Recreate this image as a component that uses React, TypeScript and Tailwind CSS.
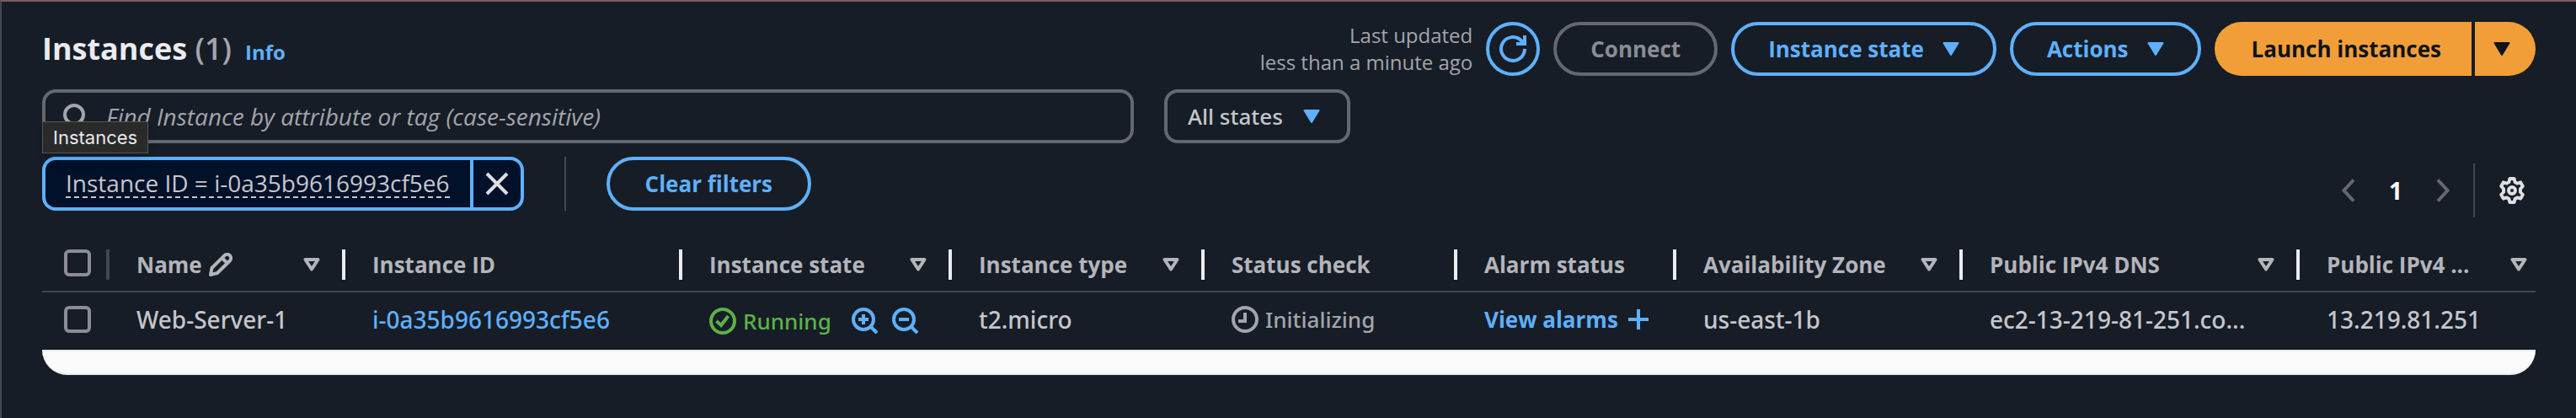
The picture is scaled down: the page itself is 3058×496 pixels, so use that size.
import React from "react";

function Caret({ className = "" }: { className?: string }) {
  return (
    <svg viewBox="0 0 20 16" className={"h-4 w-5 shrink-0 " + className} aria-hidden="true">
      <path d="M1.5 1h17L10 15z" fill="currentColor" stroke="currentColor" strokeWidth="2" strokeLinejoin="round" />
    </svg>
  );
}

function SortIcon() {
  return (
    <svg viewBox="0 0 20 16" className="h-4 w-5 shrink-0" aria-hidden="true">
      <path d="M2.5 2h15L10 13.5z" fill="none" stroke="currentColor" strokeWidth="4" strokeLinejoin="round" />
    </svg>
  );
}

function Zoom({ plus }: { plus: boolean }) {
  return (
    <svg viewBox="0 0 32 32" className="size-8" fill="none" stroke="currentColor" strokeWidth="4" aria-hidden="true">
      <circle cx="14" cy="14" r="12" />
      <path d="M22.5 22.5 30 30M8 14h12" />
      {plus && <path d="M14 8v12" />}
    </svg>
  );
}

const outline = "flex h-16 items-center rounded-full border-4 font-['Open_Sans',sans-serif] text-[26px] font-bold";
const checkbox =
  "block size-8 appearance-none rounded-md border-4 border-[#8c8c94] bg-transparent";

const columns: { label: string; sort?: boolean; edit?: boolean; width: string }[] = [
  { label: "Name", sort: true, edit: true, width: "w-[280px]" },
  { label: "Instance ID", width: "w-[400px]" },
  { label: "Instance state", sort: true, width: "w-[320px]" },
  { label: "Instance type", sort: true, width: "w-[300px]" },
  { label: "Status check", width: "w-[300px]" },
  { label: "Alarm status", width: "w-[260px]" },
  { label: "Availability Zone", sort: true, width: "w-[340px]" },
  { label: "Public IPv4 DNS", sort: true, width: "w-[400px]" },
  { label: "Public IPv4 ...", sort: true, width: "w-[280px]" },
];

export default function App() {
  return (
    <main className="min-h-screen border-t-2 border-l-2 border-t-[#7d5a5f] border-l-[#424650] bg-[#161d26] pt-6 pr-12 pb-12 pl-12 font-['Noto_Sans','Open_Sans',sans-serif] text-[28px] leading-10 font-medium text-[#c6c6cd]">
      <header className="flex items-center justify-between font-['Open_Sans','Noto_Sans',sans-serif]">
        <div className="flex items-baseline gap-4">
          <h1 className="text-4xl font-bold text-[#ebebf0]">
            Instances <span className="font-semibold text-[#a4a4ad]">(1)</span>
          </h1>
          <a href="#info" className="text-2xl font-bold text-[#5fb0ff]">Info</a>
        </div>
        <div className="flex items-center gap-4">
          <p className="text-right text-2xl leading-8 font-normal text-[#a4a4ad]">
            Last updated
            <br />
            less than a minute ago
          </p>
          <button aria-label="Refresh" className="flex size-16 items-center justify-center rounded-full border-4 border-[#5fb0ff] text-[#5fb0ff]">
            <svg viewBox="0 0 32 32" className="size-8" fill="none" stroke="currentColor" strokeWidth="4" aria-hidden="true">
              <path d="M30 16a14 14 0 1 1-4.1-9.9L30 10" />
              <path d="M30 0v10H20" />
            </svg>
          </button>
          <button disabled className={outline + " border-[#656871] px-10 text-[#8c8c94]"}>Connect</button>
          <button className={outline + " gap-[22px] border-[#5fb0ff] px-10 text-[#5fb0ff]"}>
            Instance state <Caret />
          </button>
          <button className={outline + " gap-[22px] border-[#5fb0ff] px-10 text-[#5fb0ff]"}>
            Actions <Caret />
          </button>
          <div className="flex gap-1 text-[#0f141a]">
            <button className="h-16 rounded-l-full bg-[#f29e38] pr-9 pl-11 text-[26px] font-bold">Launch instances</button>
            <button aria-label="More launch options" className="flex h-16 w-[72px] items-center rounded-r-full bg-[#f29e38] pl-[22px]">
              <Caret />
            </button>
          </div>
        </div>
      </header>

      <div className="relative mt-4 flex gap-9">
        <label className="flex h-16 w-[1296px] items-center gap-5 rounded-2xl border-4 border-[#656871] px-5">
          <svg viewBox="0 0 32 32" className="size-8 shrink-0" fill="none" stroke="#a4a4ad" strokeWidth="4" aria-hidden="true">
            <circle cx="14" cy="14" r="11" />
            <path d="M22 22l8 8" />
          </svg>
          <input
            aria-label="Find Instance"
            placeholder="Find Instance by attribute or tag (case-sensitive)"
            className="w-full bg-transparent font-['Open_Sans','Noto_Sans',sans-serif] italic outline-none placeholder:text-[#a4a4ad]"
          />
        </label>
        <button className="flex h-16 items-center gap-6 rounded-2xl border-4 border-[#656871] pr-8 pl-6 text-[26px]">
          All states <Caret className="text-[#5fb0ff]" />
        </button>
        <div role="tooltip" className="absolute top-[38px] left-0 border border-[#55555a] bg-[#2a2a2b] px-3 font-['Inter',sans-serif] text-[22px] leading-9 font-normal text-[#e8e8ea] shadow-lg">
          Instances
        </div>
      </div>

      <div className="mt-4 flex items-start justify-between">
        <div className="flex items-center gap-12">
          <div className="flex h-16 items-stretch overflow-hidden rounded-2xl border-4 border-[#5fb0ff] bg-[#001129]">
            <button className="flex items-center px-6">
              <span className="border-b-2 border-dashed border-[#c6c6cd] font-['Open_Sans','Noto_Sans',sans-serif] leading-8">Instance ID = i-0a35b9616993cf5e6</span>
            </button>
            <button aria-label="Remove filter" className="flex w-[60px] items-center justify-center border-l-4 border-[#5fb0ff] text-[#dedee3]">
              <svg viewBox="0 0 28 28" className="size-7" fill="none" stroke="currentColor" strokeWidth="4" aria-hidden="true">
                <path d="M2 2l24 24M26 2L2 26" />
              </svg>
            </button>
          </div>
          <span className="h-16 w-0.5 bg-[#424650]" />
          <button className={outline + " border-[#5fb0ff] px-[42px] text-[#5fb0ff]"}>Clear filters</button>
        </div>
        <nav aria-label="Pagination" className="mt-2 flex h-16 items-center">
          <button aria-label="Previous page" disabled className="text-[#656871]">
            <svg viewBox="0 0 16 28" className="h-7 w-4" fill="none" stroke="currentColor" strokeWidth="4" aria-hidden="true">
              <path d="M14 1.500L2.500 14 14 26.500" />
            </svg>
          </button>
          <button className="w-24 font-bold text-white">1</button>
          <button aria-label="Next page" disabled className="text-[#656871]">
            <svg viewBox="0 0 16 28" className="h-7 w-4" fill="none" stroke="currentColor" strokeWidth="4" aria-hidden="true">
              <path d="M2 1.500L13.500 14 2 26.500" />
            </svg>
          </button>
          <span className="ml-7 h-16 w-0.5 bg-[#424650]" />
          <button aria-label="Preferences" className="mr-3 ml-7 text-[#dedee3]">
            <svg viewBox="0 0 16 16" className="size-8" fill="none" stroke="currentColor" strokeWidth="2" strokeLinejoin="round" aria-hidden="true">
              <path d="M9.3 1H6.7l-.5 2-1.3.8-2-.6L1.6 5.5 3 7v2l-1.400 1.500 1.300 2.300 2-.6 1.300.8.5 2h2.600l.5-2 1.300-.8 2 .6 1.300-2.300L13 9V7l1.400-1.500-1.300-2.300-2 .6-1.300-.8z" />
              <circle cx="8" cy="8" r="2" />
            </svg>
          </button>
        </nav>
      </div>

      <div>
        <table className="mt-6 w-full table-fixed text-left">
          <thead className="font-['Open_Sans','Noto_Sans',sans-serif] text-[#b4b4bb]">
            <tr className="h-16 border-b-2 border-[#424650]">
              <th className="w-20 p-0">
                <div className="flex h-9 items-start border-r-4 border-[#424650] pl-[26px]">
                  <input type="checkbox" aria-label="Select all instances" className={checkbox} />
                </div>
              </th>
              {columns.map((c, i) => (
                <th key={c.label} className={c.width + " p-0 text-[26px] font-bold whitespace-nowrap"}>
                  <div
                    className={
                      "flex h-9 items-center pl-8 " +
                      (i < columns.length - 1 ? "border-r-4 border-[#ebebf0] pr-[26px]" : "pr-[10px]")
                    }
                  >
                    <span>{c.label}</span>
                    {c.edit && (
                      <svg viewBox="0 0 28 28" className="ml-2 size-7 shrink-0" fill="none" stroke="currentColor" strokeWidth="4" strokeLinejoin="round" aria-hidden="true">
                        <path d="M2 26l1.500-8L18.500 3.200a4.400 4.400 0 0 1 6.300 6.300L10 24z" />
                        <path d="M16 6.500l5.500 5.500" />
                      </svg>
                    )}
                    {c.sort && (
                      <span className="ml-auto">
                        <SortIcon />
                      </span>
                    )}
                  </div>
                </th>
              ))}
            </tr>
          </thead>
          <tbody>
            <tr className="h-[69px]">
              <td className="p-0 pb-1 pl-[26px]">
                <input type="checkbox" aria-label="Select Web-Server-1" className={checkbox} />
              </td>
              <td className="p-0 pb-1 pl-8">Web-Server-1</td>
              <td className="p-0 pb-1 pl-8">
                <a href="#instance" className="text-[#5fb0ff]">i-0a35b9616993cf5e6</a>
              </td>
              <td className="p-0 pl-8">
                <div className="flex items-center">
                  <span className="flex items-center gap-2 text-[26px] text-[#5bb246]">
                    <svg viewBox="0 0 32 32" className="size-8" fill="none" stroke="currentColor" strokeWidth="4" aria-hidden="true">
                      <circle cx="16" cy="16" r="14" />
                      <path d="M8.500 16l5.500 5 8.500-11" />
                    </svg>
                    Running
                  </span>
                  <span className="ml-6 flex gap-4 text-[#5fb0ff]">
                    <button aria-label="Filter in"><Zoom plus={true} /></button>
                    <button aria-label="Filter out"><Zoom plus={false} /></button>
                  </span>
                </div>
              </td>
              <td className="p-0 pb-1 pl-8">t2.micro</td>
              <td className="p-0 pb-1 pl-8">
                <span className="flex items-center gap-2 text-[26px] text-[#a4a4ad]">
                  <svg viewBox="0 0 32 32" className="size-8" fill="none" stroke="currentColor" strokeWidth="4" aria-hidden="true">
                    <circle cx="16" cy="16" r="14" />
                    <path d="M16 8v10H8" />
                  </svg>
                  Initializing
                </span>
              </td>
              <td className="p-0 pb-1 pl-8">
                <a href="#alarms" className="flex items-center gap-3 font-['Open_Sans',sans-serif] text-[26px] font-bold whitespace-nowrap text-[#5fb0ff]">
                  View alarms
                  <svg viewBox="0 0 24 24" className="size-6" fill="none" stroke="currentColor" strokeWidth="4" aria-hidden="true">
                    <path d="M12 0v24M0 12h24" />
                  </svg>
                </a>
              </td>
              <td className="p-0 pb-1 pl-8">us-east-1b</td>
              <td className="p-0 pb-1 pl-8 whitespace-nowrap">ec2-13-219-81-251.co...</td>
              <td className="p-0 pb-1 pl-8">13.219.81.251</td>
            </tr>
          </tbody>
        </table>
        <div className="h-[30px] rounded-b-[32px] border-y-2 border-[#ebebeb] bg-[#fafafa]" />
      </div>
    </main>
  );
}
